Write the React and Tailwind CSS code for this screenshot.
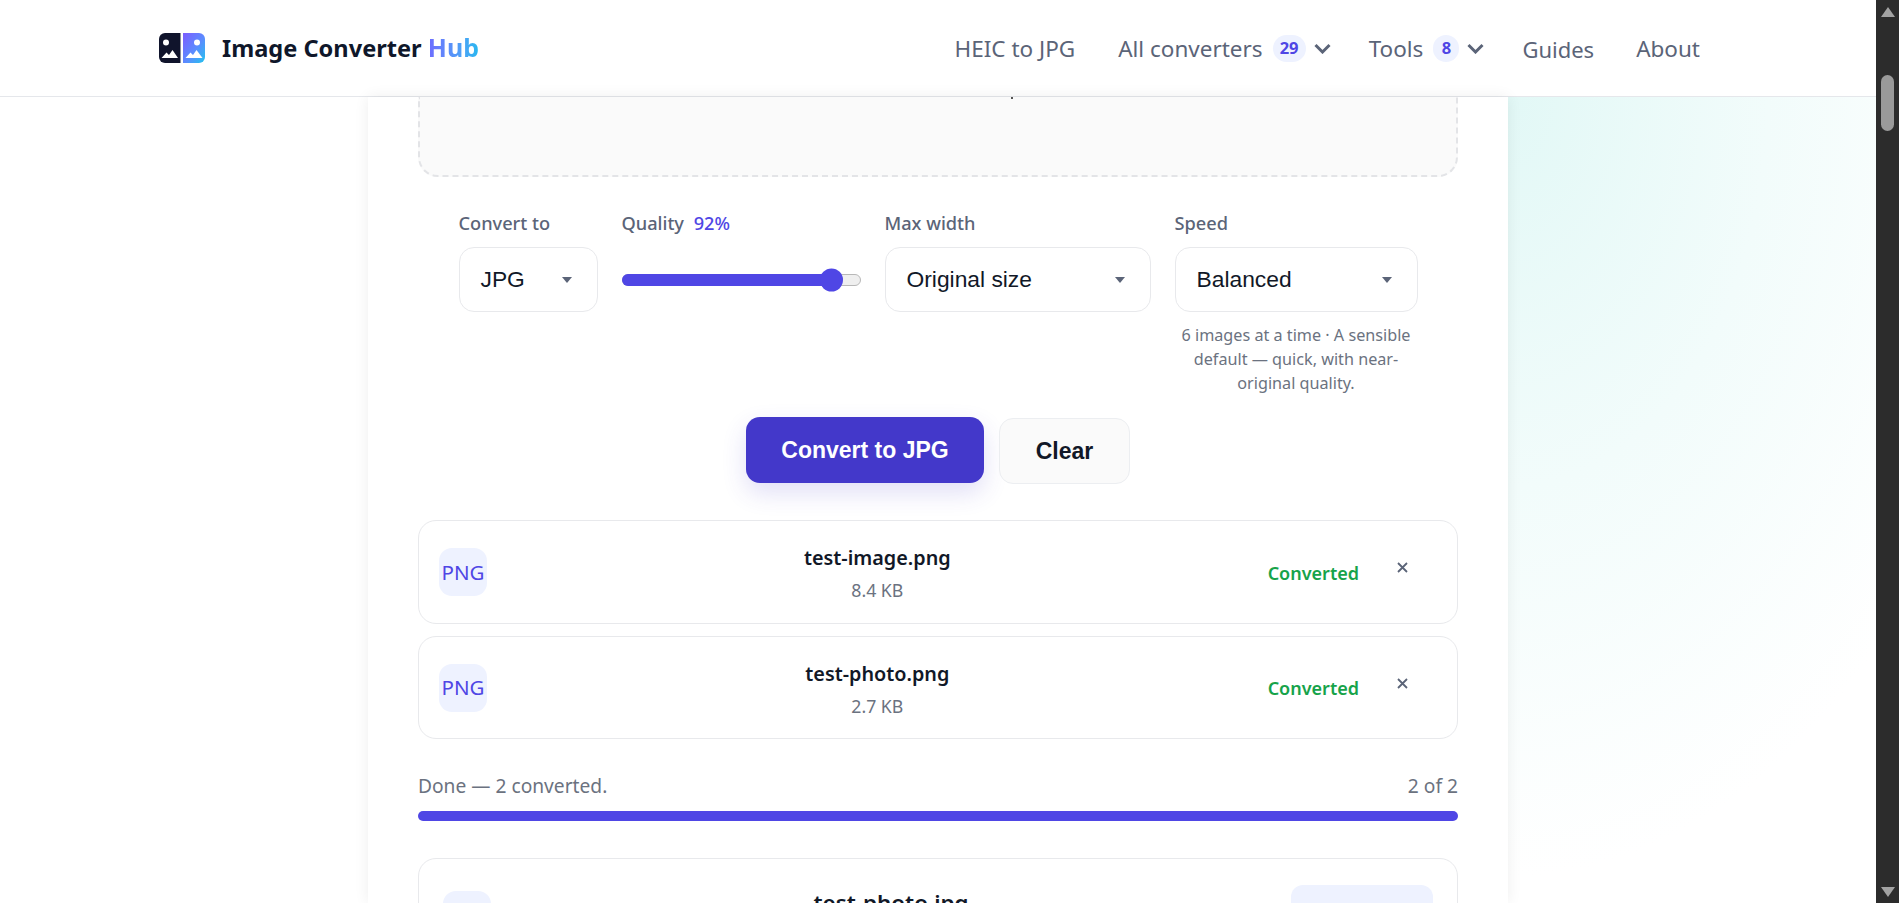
import React from "react";

const sans = "font-['Noto_Sans','Open_Sans',sans-serif]";
const arial = "font-['Liberation_Sans',Arial,sans-serif]";

function Logo() {
  return (
    <svg width="46" height="30" viewBox="0 0 46 30" className="shrink-0">
      <defs>
        <linearGradient id="lg" x1="0" y1="0" x2="1" y2="1">
          <stop offset="0" stopColor="#7c5cff" />
          <stop offset="0.55" stopColor="#5b8cff" />
          <stop offset="1" stopColor="#22c4ee" />
        </linearGradient>
      </defs>
      <path d="M6 0h15.500v30H6a6 6 0 0 1-6-6V6a6 6 0 0 1 6-6z" fill="#10142c" />
      <path d="M24 0h16a6 6 0 0 1 6 6v18a6 6 0 0 1-6 6H24z" fill="url(#lg)" />
      <circle cx="7" cy="9.500" r="3" fill="#fff" />
      <path d="M2.500 25l5-5.500 2.500 2.500 3.500-5 5.500 8z" fill="#fff" />
      <circle cx="38" cy="9.500" r="3" fill="#fff" />
      <path d="M26.500 25l5-5.500 2.500 2.500 3.500-5 6 8z" fill="#fff" />
    </svg>
  );
}

function Chevron() {
  return (
    <svg width="17" height="11" viewBox="0 0 17 11" className="shrink-0">
      <path d="M1.500 2 8.500 9l7-7" fill="none" stroke="#5b6478" strokeWidth="3" />
    </svg>
  );
}

function Badge({ children, className }) {
  return (
    <span className={`flex h-[27px] items-center justify-center rounded-full bg-[#eef2ff] text-[16.500px] font-bold text-[#4f46e5] ${className}`}>
      {children}
    </span>
  );
}

function Header() {
  return (
    <header className="flex h-[97px] shrink-0 items-center justify-between border-b border-[#e5e7eb] bg-white pl-[159px] pr-[176px]">
      <div className="flex items-center gap-[17px]">
        <Logo />
        <span className="text-[23.600px] font-bold leading-none text-[#0f172a]">
          Image Converter{" "}
          <span className="bg-gradient-to-r from-[#6d6cff] to-[#22b8f0] bg-clip-text text-[25px] text-transparent">Hub</span>
        </span>
      </div>
      <nav className="flex items-center text-[22.500px] leading-[32px] text-[#5b6478]">
        <span className="mr-[43px] pt-[2px]">HEIC to JPG</span>
        <span className="mr-[10px] pt-[2px]">All converters</span>
        <Badge className="mr-[8px] w-[33px]">29</Badge>
        <Chevron />
        <span className="ml-[38px] mr-[10px] pt-[2px]">Tools</span>
        <Badge className="mr-[8px] w-[26px]">8</Badge>
        <Chevron />
        <span className="ml-[38px] pt-[1px] text-[22px]">Guides</span>
        <span className="ml-[42px] pt-[2px]">About</span>
      </nav>
    </header>
  );
}

function Caret() {
  return (
    <svg width="10" height="6" viewBox="0 0 10 6" className="shrink-0">
      <path d="M0 0h10L5 6z" fill="#5b6478" />
    </svg>
  );
}

function Select({ value, width }) {
  return (
    <div className={`flex h-[65px] items-center justify-between rounded-[15px] border border-[#e8e9ec] bg-white pl-[21px] pr-[25px] text-[22.800px] text-[#111827] ${arial} ${width}`}>
      <span>{value}</span>
      <Caret />
    </div>
  );
}

function Label({ children }) {
  return <div className="h-[35px] text-[18.200px] font-medium leading-[22px] text-[#5b6478]">{children}</div>;
}

function Controls() {
  return (
    <div className="mt-[35px] flex items-start justify-center gap-[24px]">
      <div>
        <Label>Convert to</Label>
        <Select value="JPG" width="w-[139px]" />
      </div>
      <div className="w-[239px]">
        <Label>
          Quality <span className="ml-[5px] text-[#4f46e5]">92%</span>
        </Label>
        <div className="flex h-[65px] items-center">
          <div className="relative h-[12px] w-full rounded-full border border-[#b8b8b8] bg-[#efefef]">
            <div className="absolute -inset-px right-[22px] rounded-full bg-[#4f46e5]" />
            <div className="absolute right-[17px] top-1/2 h-[23px] w-[23px] -translate-y-1/2 rounded-full bg-[#4f46e5]" />
          </div>
        </div>
      </div>
      <div>
        <Label>Max width</Label>
        <Select value="Original size" width="w-[266px]" />
      </div>
      <div className="w-[243px]">
        <Label>Speed</Label>
        <Select value="Balanced" width="w-full" />
        <p className="mt-[11px] text-center text-[16.200px] leading-[24px] text-[#6b7280]">
          6 images at a time · A sensible default — quick, with near-original quality.
        </p>
      </div>
    </div>
  );
}

function Buttons() {
  return (
    <div className={`mt-[22px] flex items-start justify-center gap-[15px] ${arial}`}>
      <button className="h-[66px] w-[238px] rounded-[14px] bg-[#4338ca] text-[23px] font-bold text-white shadow-[0_10px_24px_rgba(67,56,202,0.16)]">
        Convert to JPG
      </button>
      <button className="mt-px h-[66px] w-[131px] rounded-[14px] border border-[#eceef1] bg-[#fafafa] text-[23px] font-bold text-[#111827]">
        Clear
      </button>
    </div>
  );
}

function CloseMark() {
  return (
    <svg width="11" height="11" viewBox="0 0 11 11" className="mb-[9px] shrink-0">
      <path d="M1 1l9 9M10 1l-9 9" stroke="#5b6478" strokeWidth="1.800" fill="none" />
    </svg>
  );
}

function FileRow({ name, size, height }) {
  return (
    <div className={`flex items-center rounded-[18px] border border-[#e8e9ec] bg-white pl-[20px] ${height}`}>
      <div className="flex h-[48px] w-[48px] shrink-0 items-center justify-center rounded-[13px] bg-[#eef2ff] text-[20.500px] text-[#4f46e5]">
        PNG
      </div>
      <div className="flex-1 pt-[2px] text-center">
        <div className="text-[19.800px] font-semibold leading-[28px] text-[#111827]">{name}</div>
        <div className="mt-[6px] text-[17.700px] leading-[24px] text-[#6b7280]">{size}</div>
      </div>
      <span className="whitespace-nowrap pt-[2px] text-[18px] font-semibold text-[#16a34a]">Converted</span>
      <div className="flex w-[98px] shrink-0 items-center pl-[38px]">
        <CloseMark />
      </div>
    </div>
  );
}

function Progress() {
  return (
    <div className="mt-[33px]">
      <div className="flex justify-between text-[19.200px] leading-[28px] text-[#6b7280]">
        <span>Done — 2 converted.</span>
        <span>2 of 2</span>
      </div>
      <div className="mt-[11px] h-[10px] rounded-full bg-[#4f46e5]" />
    </div>
  );
}

function ResultCard() {
  return (
    <div className="mt-[37px] flex h-[120px] items-start rounded-t-[18px] border border-[#e8e9ec] bg-white pl-[24px] pr-[24px]">
      <div className="mt-[32px] h-[48px] w-[48px] shrink-0 rounded-[13px] bg-[#eef2ff]" />
      <div className="mt-[28px] flex-1 text-center text-[22.400px] font-semibold leading-[32px] text-[#111827]">
        test-photo.jpg
      </div>
      <div className="mt-[26px] h-[60px] w-[142px] shrink-0 rounded-[12px] bg-[#eef2ff]" />
    </div>
  );
}

function Scrollbar() {
  return (
    <aside className="flex w-[23px] shrink-0 flex-col items-center bg-[#2c2c2c] pb-[6px] pt-[7px]">
      <svg width="14" height="10" viewBox="0 0 14 10">
        <path d="M7 0l7 10H0z" fill="#a3a3a3" />
      </svg>
      <div className="mt-[58px] h-[56px] w-[13px] rounded-full bg-[#9a9a9a]" />
      <svg width="14" height="10" viewBox="0 0 14 10" className="mt-auto">
        <path d="M0 0h14L7 10z" fill="#a3a3a3" />
      </svg>
    </aside>
  );
}

export default function App() {
  return (
    <div className={`flex h-[903px] w-full overflow-hidden bg-white ${sans}`}>
      <div className="flex min-w-0 flex-1 flex-col">
        <Header />
        <div className="flex min-h-0 flex-1">
          <div className="w-[368px] shrink-0 bg-white" />
          <main className="relative z-10 w-[1140px] shrink-0 overflow-hidden bg-white px-[50px] shadow-[0_0_14px_rgba(0,0,0,0.07)]">
            <div className="relative h-[80px] rounded-b-[20px] border-2 border-t-0 border-dashed border-[#e3e4e7] bg-[#fafafa]">
              <span className="absolute left-[591px] top-0 h-[2px] w-[2px] bg-[#555]" />
            </div>
            <Controls />
            <Buttons />
            <div className="mt-[36px] flex flex-col gap-[12px]">
              <FileRow name="test-image.png" size="8.4 KB" height="h-[104px]" />
              <FileRow name="test-photo.png" size="2.7 KB" height="h-[103px]" />
            </div>
            <Progress />
            <ResultCard />
          </main>
          <div className="min-w-0 flex-1 bg-[radial-gradient(ellipse_520px_780px_at_0%_0%,#e2f8f6_0%,#f2fcfb_50%,#ffffff_100%)]" />
        </div>
      </div>
      <Scrollbar />
    </div>
  );
}
